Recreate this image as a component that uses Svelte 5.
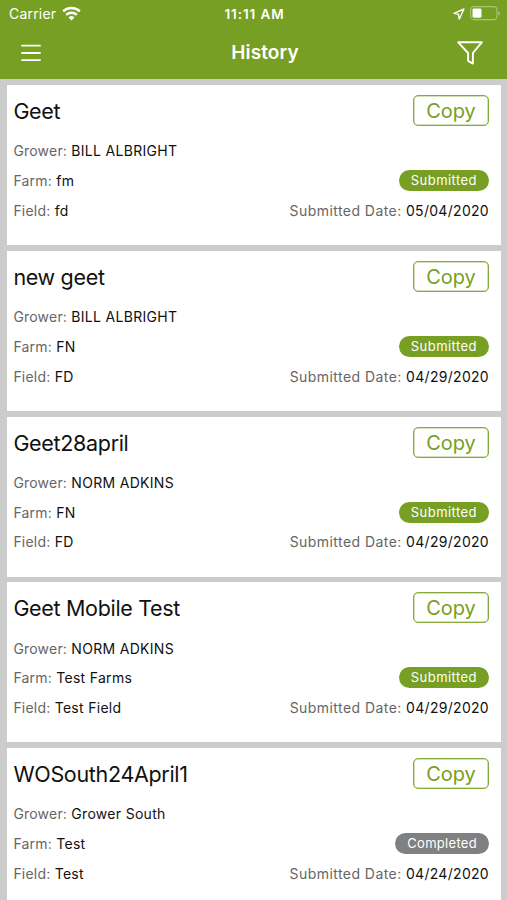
<script>
  let records = [
    { name: 'Geet', grower: 'BILL ALBRIGHT', farm: 'fm', field: 'fd', status: 'Submitted', date: '05/04/2020' },
    { name: 'new geet', grower: 'BILL ALBRIGHT', farm: 'FN', field: 'FD', status: 'Submitted', date: '04/29/2020' },
    { name: 'Geet28april', grower: 'NORM ADKINS', farm: 'FN', field: 'FD', status: 'Submitted', date: '04/29/2020' },
    { name: 'Geet Mobile Test', grower: 'NORM ADKINS', farm: 'Test Farms', field: 'Test Field', status: 'Submitted', date: '04/29/2020' },
    { name: 'WOSouth24April1', grower: 'Grower South', farm: 'Test', field: 'Test', status: 'Completed', date: '04/24/2020' }
  ];

  function handleCopy(record) {
    const index = records.indexOf(record);
    records = [...records.slice(0, index + 1), { ...record }, ...records.slice(index + 1)];
  }
</script>

<div class="screen">
  <header>
    <div class="status-bar">
      <div class="carrier">
        <span>Carrier</span>
        <svg width="19" height="15" viewBox="0 0 19 15" fill="none" stroke="#fff" stroke-width="2.5">
          <path d="M1.2 5.4a12 12 0 0 1 16.6 0" />
          <path d="M4.2 8.8a7.7 7.7 0 0 1 10.6 0" />
          <path d="M9.5 14.4 6.5 11.4a4.3 4.3 0 0 1 6 0z" fill="#fff" stroke="none" />
        </svg>
      </div>
      <span class="time">11:11 AM</span>
      <div class="indicators">
        <svg width="12" height="12" viewBox="0 0 12 12" fill="none" stroke="#fff" stroke-width="1.4" stroke-linejoin="round">
          <path d="M10.9 1 1 5.4l4.4.9.9 4.7z" />
        </svg>
        <svg width="31" height="15" viewBox="0 0 31 15">
          <rect x=".6" y=".6" width="26.3" height="13" rx="3.4" fill="none" stroke="#a9c66f" stroke-width="1.1" />
          <rect x="2.5" y="2.5" width="9" height="9.2" rx="1.4" fill="#fff" />
          <path d="M28.2 5v4.4q1.7-.7 1.7-2.2T28.2 5z" fill="#a9c66f" />
        </svg>
      </div>
    </div>
    <div class="nav-bar">
      <button class="icon" aria-label="Menu">
        <svg width="20" height="18" viewBox="0 0 20 18" stroke="#fff" stroke-width="1.8" stroke-linecap="round">
          <path d="M1 1.7h18M1 9h18M1 16.2h18" />
        </svg>
      </button>
      <h1>History</h1>
      <button class="icon filter" aria-label="Filter">
        <svg width="26" height="24" viewBox="0 0 26 24" fill="none" stroke="#fff" stroke-width="1.9" stroke-linejoin="round">
          <path d="M1.2 1.3h23.6L15.9 12v10.6l-4.8-2.7V12z" />
        </svg>
      </button>
    </div>
  </header>

  <main>
    {#each records as record}
      <section class="card">
        <div class="top">
          <h2>{record.name}</h2>
          <button class="copy" on:click={() => handleCopy(record)}>Copy</button>
        </div>
        <div class="row">
          <p><span>Grower:</span> {record.grower}</p>
        </div>
        <div class="row">
          <p><span>Farm:</span> {record.farm}</p>
          <div class="badge" class:completed={record.status === 'Completed'}>{record.status}</div>
        </div>
        <div class="row">
          <p><span>Field:</span> {record.field}</p>
          <p class="date"><span>Submitted Date:</span> {record.date}</p>
        </div>
      </section>
    {/each}
  </main>
</div>

<style>
  :global(body) {
    margin: 0;
    background: #ccc;
  }

  .screen {
    height: 900px;
    overflow: hidden;
    background: #ccc;
    font-family: Inter, 'Liberation Sans', sans-serif;
    color: #111;
  }

  header {
    height: 79px;
    background: #779f24;
    color: #fff;
  }

  .status-bar {
    display: grid;
    grid-template-columns: 1fr auto 1fr;
    align-items: center;
    height: 27px;
    padding: 0 6px 0 9px;
    font-size: 14px;
    box-sizing: border-box;
  }

  .carrier, .indicators {
    display: flex;
    align-items: center;
  }

  .carrier {
    gap: 6px;
    letter-spacing: 0.2px;
  }

  .indicators {
    justify-content: flex-end;
    gap: 5px;
  }

  .time {
    font-weight: 600;
    font-size: 13.5px;
    letter-spacing: 0.9px;
    margin-right: 1px;
    font-kerning: none;
  }

  .nav-bar {
    display: grid;
    grid-template-columns: 1fr auto 1fr;
    align-items: center;
    height: 50px;
    padding: 1px 24px 0 21px;
    margin-right: -26px;
    box-sizing: border-box;
  }

  h1 {
    margin: 0;
    font-size: 19px;
    font-weight: 600;
    letter-spacing: 0.1px;
  }

  .icon {
    display: flex;
    padding: 0;
    border: 0;
    background: none;
  }

  .filter {
    justify-self: end;
    margin-right: 26px;
  }

  main {
    display: flex;
    flex-direction: column;
    gap: 5.75px;
    padding: 6px 6px 0 7px;
  }

  .card {
    flex: none;
    height: 160px;
    padding: 10px 12px 0 6.4px;
    box-sizing: border-box;
    background: #fff;
  }

  .top {
    display: flex;
    justify-content: space-between;
    height: 41px;
  }

  h2 {
    margin: 0;
    font-size: 21.5px;
    font-weight: 400;
    line-height: 32px;
    letter-spacing: -0.32px;
  }

  .copy {
    width: 76px;
    height: 31px;
    padding: 0;
    border: 1px solid #86aa3e;
    border-radius: 5px;
    box-shadow: inset 0 0 0 0.5px #a9c376;
    background: #fff;
    color: #779f24;
    font-family: inherit;
    font-size: 20px;
    line-height: 30px;
    letter-spacing: -0.1px;
  }

  .row {
    display: flex;
    align-items: center;
    justify-content: space-between;
    height: 29.8px;
  }

  p {
    margin: 0;
    font-size: 14px;
    letter-spacing: 0.3px;
  }

  p span {
    color: #666;
    letter-spacing: 0.2px;
  }

  .date span {
    letter-spacing: 0.45px;
  }

  .badge {
    height: 21px;
    padding: 0 12px;
    border-radius: 11px;
    background: #779f24;
    color: #fff;
    font-size: 13px;
    line-height: 21px;
    letter-spacing: 0.45px;
  }

  .badge.completed {
    background: #808080;
    letter-spacing: 0.3px;
  }
</style>
